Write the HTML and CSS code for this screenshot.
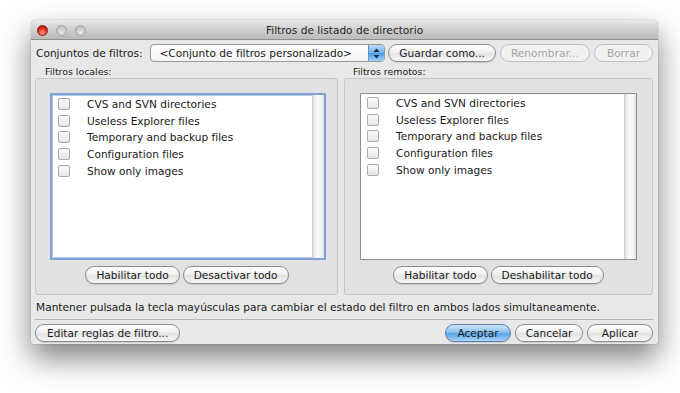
FILE: index.html
```html
<!DOCTYPE html>
<html lang="es">
<head>
    <meta charset="UTF-8">
    <meta name="viewport" content="width=device-width, initial-scale=1.0">
    <title>Filtros de listado de directorio</title>
    <link rel="stylesheet" href="styles.css">
</head>
<body>
    <div class="stage">
        <div class="window">
            <div class="titlebar">
                <div class="lights">
                    <span class="light red"></span>
                    <span class="light"></span>
                    <span class="light"></span>
                </div>
                <div class="title">Filtros de listado de directorio</div>
            </div>
            <div class="content">
                <div class="set-row">
                    <span class="set-label">Conjuntos de filtros:</span>
                    <div class="popup">
                        <span class="popup-text">&lt;Conjunto de filtros personalizado&gt;</span>
                        <span class="stepper">
                            <svg width="7" height="11" viewBox="0 0 7 11"><path d="M3.5 0.5 L6.5 4 L0.5 4 Z M3.5 10.5 L6.5 7 L0.5 7 Z" fill="#1d2c45"/></svg>
                        </span>
                    </div>
                    <button class="btn">Guardar como...</button>
                    <button class="btn disabled">Renombrar...</button>
                    <button class="btn disabled">Borrar</button>
                </div>

                <div class="panes">
                    <div class="pane local">
                        <div class="pane-title">Filtros locales:</div>
                        <div class="group">
                            <div class="list focused">
                                <ul class="items">
                                    <li><span class="check"></span>CVS and SVN directories</li>
                                    <li><span class="check"></span>Useless Explorer files</li>
                                    <li><span class="check"></span>Temporary and backup files</li>
                                    <li><span class="check"></span>Configuration files</li>
                                    <li><span class="check"></span>Show only images</li>
                                </ul>
                                <div class="scrolltrack"></div>
                            </div>
                            <div class="group-buttons">
                                <button class="btn">Habilitar todo</button>
                                <button class="btn">Desactivar todo</button>
                            </div>
                        </div>
                    </div>
                    <div class="pane remote">
                        <div class="pane-title">Filtros remotos:</div>
                        <div class="group">
                            <div class="list">
                                <ul class="items">
                                    <li><span class="check"></span>CVS and SVN directories</li>
                                    <li><span class="check"></span>Useless Explorer files</li>
                                    <li><span class="check"></span>Temporary and backup files</li>
                                    <li><span class="check"></span>Configuration files</li>
                                    <li><span class="check"></span>Show only images</li>
                                </ul>
                                <div class="scrolltrack"></div>
                            </div>
                            <div class="group-buttons">
                                <button class="btn">Habilitar todo</button>
                                <button class="btn">Deshabilitar todo</button>
                            </div>
                        </div>
                    </div>
                </div>

                <div class="hint">Mantener pulsada la tecla mayúsculas para cambiar el estado del filtro en ambos lados simultaneamente.</div>

                <div class="footer">
                    <button class="btn">Editar reglas de filtro...</button>
                    <div class="footer-right">
                        <button class="btn default">Aceptar</button>
                        <button class="btn cancel">Cancelar</button>
                        <button class="btn">Aplicar</button>
                    </div>
                </div>
            </div>
        </div>
    </div>
</body>
</html>
```

FILE: styles.css
```css
* { margin: 0; padding: 0; box-sizing: border-box; }
body {
    font-family: "DejaVu Sans", "Liberation Sans", sans-serif;
    font-size: 10.6px;
    color: #1a1a1a;
    background: #fff;
    width: 680px;
    height: 393px;
    overflow: hidden;
}
.stage { padding: 20px 22px 0 31px; }
.window {
    width: 627px;
    height: 324px;
    background: #e8e8e8;
    border-radius: 5px 5px 2px 2px;
    box-shadow: 0 14px 30px rgba(0,0,0,0.5), 0 0 1px rgba(0,0,0,0.5);
    overflow: hidden;
}

/* title bar */
.titlebar {
    position: relative;
    height: 20px;
    background: linear-gradient(#e9e9e9, #cacaca 60%, #bbbbbb);
    border-bottom: 1px solid #8f8f8f;
    display: flex;
    align-items: center;
    justify-content: center;
}
.lights { position: absolute; left: 6px; top: 5px; display: flex; gap: 8px; }
.light {
    width: 11px;
    height: 11px;
    border-radius: 50%;
    background: radial-gradient(circle at 50% 70%, #e8e8e8, #c2c2c2 70%);
    border: 1px solid #a3a3a3;
}
.light.red {
    background: radial-gradient(circle at 50% 75%, #ff9a8e, #d8241a 60%, #a4120b);
    border-color: #8c1a12;
}
.title { font-size: 10.6px; color: #262626; }

.content { padding: 3px 5px 0 4px; }

/* buttons */
.btn {
    font-family: inherit;
    font-size: 10.6px;
    height: 18px;
    padding: 0 10px;
    border: 1px solid #8d8d8d;
    border-radius: 9px;
    color: #1a1a1a;
    background: linear-gradient(#ffffff, #f1f1f1 45%, #e3e3e3 55%, #f6f6f6);
    box-shadow: 0 1px 1px rgba(0,0,0,0.12);
    white-space: nowrap;
}
.btn.disabled { color: #a6a6a6; border-color: #c0c0c0; background: #f1f1f1; box-shadow: none; }
.btn.default {
    border-color: #5b7fae;
    background: linear-gradient(#cfe6fb, #8cc1f0 45%, #5aa3e6 55%, #a9d6fb);
}

/* filter set row */
.set-row { display: flex; align-items: center; height: 20px; }
.set-label { width: 116px; padding-left: 1px; }
.popup {
    display: flex;
    align-items: stretch;
    width: 236px;
    height: 18px;
    margin-right: 3px;
    border: 1px solid #999;
    border-radius: 4px;
    background: linear-gradient(#ffffff, #f3f3f3);
    overflow: hidden;
}
.popup-text { flex: 1; padding-left: 8px; line-height: 16px; white-space: nowrap; }
.stepper {
    width: 16px;
    display: flex;
    align-items: center;
    justify-content: center;
    background: linear-gradient(#b9dcfa, #6eb0ec 50%, #4f9be2 51%, #9fd0fb);
    border-left: 1px solid #6c8fbf;
}
.set-row .btn { margin-right: 4px; }
.set-row .btn:last-child { margin-right: 0; padding: 0 12px; }

/* panes */
.panes { display: grid; grid-template-columns: 303px 1fr; gap: 6px; margin-top: 2px; }
.pane-title { font-size: 9.4px; height: 13px; line-height: 13px; padding-left: 10px; color: #222; }
.remote .pane-title { padding-left: 9px; }
.group {
    height: 217px;
    border: 1px solid #c6c6c6;
    border-radius: 3px;
    background: #e1e1e1;
    padding: 14px 11px 0 14px;
}
.remote .group { padding: 14px 15px 0 15px; }
.list {
    display: flex;
    height: 167px;
    background: #fff;
    border: 1px solid #8e8e8e;
}
.list.focused {
    border: 2px solid #7fa1d6;
    box-shadow: inset 0 0 0 1px #b5c9e8;
}
.items { flex: 1; list-style: none; padding-top: 1px; }
.items li { display: flex; align-items: center; height: 16.6px; padding-left: 6px; white-space: nowrap; }
.check {
    width: 12px;
    height: 12px;
    margin-right: 17px;
    border: 1px solid #aaaaaa;
    border-radius: 2px;
    background: linear-gradient(#fbfbfb, #e6e6e6);
}
.scrolltrack {
    width: 12px;
    border-left: 1px solid #cfcfcf;
    background: linear-gradient(90deg, #e4e4e4, #fbfbfb 40%, #f2f2f2 80%, #dcdcdc);
}
.group-buttons { display: flex; justify-content: center; gap: 3px; margin-top: 6px; padding-right: 2px; }
.remote .group-buttons { padding-right: 0; }

/* hint + footer */
.hint { margin-top: 6px; height: 13px; line-height: 13px; padding-left: 1px; white-space: nowrap; }
.footer {
    display: flex;
    justify-content: space-between;
    margin-top: 5px;
    padding-top: 4px;
    border-top: 1px solid #b8b8b8;
}
.footer-right { display: flex; gap: 4px; }
.footer .btn { padding: 0 11px; }
.footer-right .btn { width: 66px; padding: 0; }
.footer-right .btn.cancel { width: 68px; }
```
